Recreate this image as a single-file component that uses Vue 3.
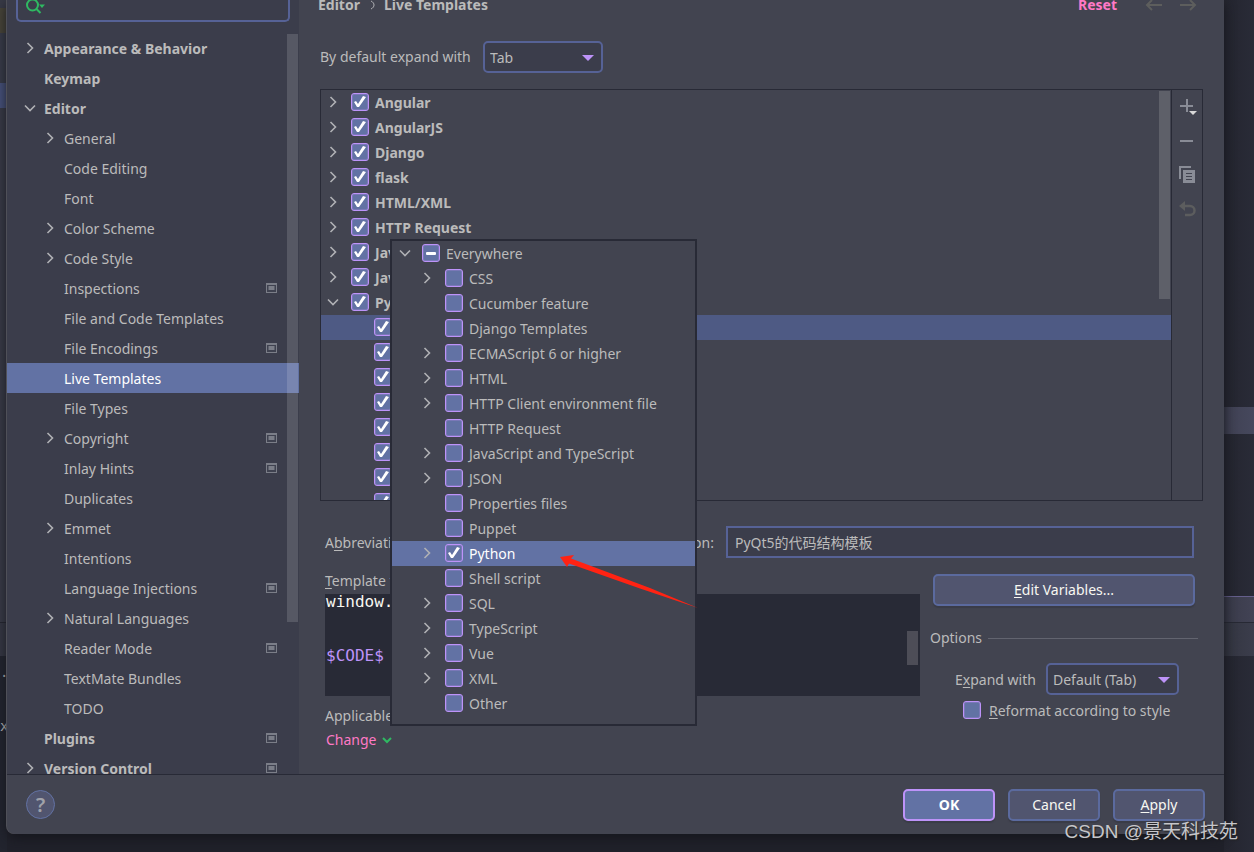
<script setup>
import { ref } from 'vue'

const settings = ref([
  { name: 'Appearance & Behavior', level: 0, arrow: 'right' },
  { name: 'Keymap', level: 0 },
  { name: 'Editor', level: 0, arrow: 'down' },
  { name: 'General', level: 1, arrow: 'right' },
  { name: 'Code Editing', level: 1 },
  { name: 'Font', level: 1 },
  { name: 'Color Scheme', level: 1, arrow: 'right' },
  { name: 'Code Style', level: 1, arrow: 'right' },
  { name: 'Inspections', level: 1, project: true },
  { name: 'File and Code Templates', level: 1 },
  { name: 'File Encodings', level: 1, project: true },
  { name: 'Live Templates', level: 1, selected: true },
  { name: 'File Types', level: 1 },
  { name: 'Copyright', level: 1, arrow: 'right', project: true },
  { name: 'Inlay Hints', level: 1, project: true },
  { name: 'Duplicates', level: 1 },
  { name: 'Emmet', level: 1, arrow: 'right' },
  { name: 'Intentions', level: 1 },
  { name: 'Language Injections', level: 1, project: true },
  { name: 'Natural Languages', level: 1, arrow: 'right' },
  { name: 'Reader Mode', level: 1, project: true },
  { name: 'TextMate Bundles', level: 1 },
  { name: 'TODO', level: 1 },
  { name: 'Plugins', level: 0, project: true },
  { name: 'Version Control', level: 0, arrow: 'right', project: true },
])

const groups = ref([
  { name: 'Angular', on: true },
  { name: 'AngularJS', on: true },
  { name: 'Django', on: true },
  { name: 'flask', on: true },
  { name: 'HTML/XML', on: true },
  { name: 'HTTP Request', on: true },
  { name: 'JavaScript', on: true },
  { name: 'JavaScript Testing', on: true },
  { name: 'Python', on: true, open: true },
])

const templates = ref([true, true, true, true, true, true, true, true])

const contexts = ref([
  { name: 'CSS', arrow: true },
  { name: 'Cucumber feature' },
  { name: 'Django Templates' },
  { name: 'ECMAScript 6 or higher', arrow: true },
  { name: 'HTML', arrow: true },
  { name: 'HTTP Client environment file', arrow: true },
  { name: 'HTTP Request' },
  { name: 'JavaScript and TypeScript', arrow: true },
  { name: 'JSON', arrow: true },
  { name: 'Properties files' },
  { name: 'Puppet' },
  { name: 'Python', arrow: true, on: true, selected: true },
  { name: 'Shell script' },
  { name: 'SQL', arrow: true },
  { name: 'TypeScript', arrow: true },
  { name: 'Vue', arrow: true },
  { name: 'XML', arrow: true },
  { name: 'Other' },
])

const description = ref('PyQt5的代码结构模板')
const reformat = ref(false)
</script>

<template>
  <div class="screen">
    <div class="backdrop" aria-hidden="true">
      <i class="l-top"></i><i class="l-brown"></i><i class="l-gap"></i><i class="l-blue"></i>
      <i class="l-mid"></i><i class="l-bar"></i>
      <div class="l-code"><span>.</span><span>x</span></div>
    </div>

    <div class="dialog">
      <div class="body">
        <aside class="sidebar">
          <div class="search">
            <svg width="22" height="20" viewBox="0 0 22 20" fill="none" stroke="#2fb962" stroke-width="2">
              <circle cx="6.500" cy="5" r="5.500" /><path d="M10.500 9l4 4" />
              <path d="M13 4.500h6l-3 3.500z" fill="#2fb962" stroke="none" />
            </svg>
            <input type="text" aria-label="Search settings" />
          </div>
          <ul class="tree">
            <li
              v-for="item in settings"
              :key="item.name"
              :class="['node', 'level' + item.level, { selected: item.selected }]"
            >
              <span class="twist">
                <svg v-if="item.arrow" :class="{ open: item.arrow === 'down' }" class="chevron" viewBox="0 0 14 14">
                  <path d="M4.500 2l5 5-5 5" />
                </svg>
              </span>
              <a href="#">{{ item.name }}</a>
              <svg v-if="item.project" class="project" viewBox="0 0 11 10">
                <path d="M0 0h11v10H0z" fill="#7b7e88" /><path d="M1 2h9v7H1z" fill="#3f4250" />
                <path d="M3 3h5v4H3z" fill="#7b7e88" /><path d="M2 3h1v4H2zM8 3h1v4H8z" fill="#5d606c" />
              </svg>
            </li>
          </ul>
          <div class="tree-scroll"></div>
        </aside>

        <main class="main">
          <header class="crumbs">
            <span>Editor</span>
            <svg width="6" height="10" viewBox="0 0 6 10"><path d="M1 1c2 1 3 2.500 3 4s-1 3-3 4" /></svg>
            <span>Live Templates</span>
            <a href="#" class="reset">Reset</a>
            <button class="nav" aria-label="Back">
              <svg viewBox="0 0 18 12"><path d="M17 6H2M7 1L2 6l5 5" /></svg>
            </button>
            <button class="nav" aria-label="Forward">
              <svg viewBox="0 0 18 12"><path d="M1 6h15M11 1l5 5-5 5" /></svg>
            </button>
          </header>

          <div class="default-row">
            <label for="default-key">By default expand with</label>
            <span class="select w-tab">
              <select id="default-key"><option>Tab</option></select>
              <svg viewBox="0 0 12 6"><path d="M0 0h12L6 6z" /></svg>
            </span>
          </div>

          <div class="list-box">
            <ul class="list">
              <li v-for="(group, i) in groups" :key="group.name" class="group">
                <svg class="chevron" :class="{ open: group.open }" viewBox="0 0 14 14"><path d="M4.500 2l5 5-5 5" /></svg>
                <input :id="'group' + i" v-model="group.on" type="checkbox" class="check" />
                <label :for="'group' + i">{{ group.name }}</label>
              </li>
              <li v-for="(on, i) in templates" :key="i" class="child" :class="{ current: i === 0 }">
                <input v-model="templates[i]" type="checkbox" class="check" aria-label="Enable template" />
              </li>
            </ul>
            <div class="list-scroll"></div>
            <div class="tools">
              <button aria-label="Add">
                <svg viewBox="0 0 18 18">
                  <path d="M8 1v13M1 8h13" stroke="#898c96" stroke-width="2" />
                  <path d="M10 13h8l-4 4z" fill="#d8d8d8" />
                </svg>
              </button>
              <button aria-label="Remove">
                <svg viewBox="0 0 18 18"><path d="M1 9h13" stroke="#898c96" stroke-width="2" /></svg>
              </button>
              <button aria-label="Duplicate">
                <svg viewBox="0 0 18 18">
                  <path d="M1 13V1h11" fill="none" stroke="#898c96" stroke-width="2" />
                  <path d="M4 4h12v13H4z" fill="#898c96" />
                  <path d="M7 7.500h6M7 10.500h6M7 13.500h6" stroke="#424450" />
                </svg>
              </button>
              <button aria-label="Restore">
                <svg viewBox="0 0 18 18">
                  <path d="M5 6h6a4 4 0 0 1 0 9H6" fill="none" stroke="#5c5d5e" stroke-width="2.500" />
                  <path d="M0 6l6-5v10z" fill="#5c5d5e" />
                </svg>
              </button>
            </div>
          </div>

          <div class="form">
            <div class="name-row">
              <div class="name-cell">
                <label for="abbr">A<u>b</u>breviation:</label>
                <input id="abbr" type="text" />
                <label for="desc">Description:</label>
              </div>
              <input id="desc" v-model="description" type="text" class="desc" />
            </div>

            <div class="editor-grid">
              <section class="editor-col">
                <div class="caption"><u>T</u>emplate text:</div>
                <div class="code">
                  <pre>window.show()


<b>$CODE$</b></pre>
                  <div class="code-scroll"></div>
                </div>
                <div class="applicable">Applicable in Python</div>
                <a href="#" class="change">Change
                  <svg viewBox="0 0 10 7"><path d="M1 1l4 4 4-4" /></svg>
                </a>
              </section>
              <section class="options-col">
                <button class="btn edit"><span><u>E</u>dit Variables...</span></button>
                <div class="options-title">Options</div>
                <div class="expand-row">
                  <label for="expand">E<u>x</u>pand with</label>
                  <span class="select w-default">
                    <select id="expand"><option>Default (Tab)</option></select>
                    <svg viewBox="0 0 12 6"><path d="M0 0h12L6 6z" /></svg>
                  </span>
                </div>
                <div class="reformat-row">
                  <input id="reformat" v-model="reformat" type="checkbox" class="check" />
                  <label for="reformat"><u>R</u>eformat according to style</label>
                </div>
              </section>
            </div>
          </div>

          <div class="popup">
            <div class="ctx root">
              <svg class="chevron open" viewBox="0 0 14 14"><path d="M4.500 2l5 5-5 5" /></svg>
              <input id="everywhere" type="checkbox" class="check mixed" />
              <label for="everywhere">Everywhere</label>
            </div>
            <div v-for="(ctx, i) in contexts" :key="i" class="ctx" :class="{ picked: ctx.selected }">
              <span class="twist">
                <svg v-if="ctx.arrow" class="chevron" viewBox="0 0 14 14"><path d="M4.500 2l5 5-5 5" /></svg>
              </span>
              <input :id="'ctx' + i" v-model="ctx.on" type="checkbox" class="check" />
              <label :for="'ctx' + i">{{ ctx.name }}</label>
            </div>
            <svg class="pointer" viewBox="0 0 142 56">
              <path d="M0 2L14 0 11 3.500 90 33 138 53 80 33.500 9 8.500 7 12z" fill="#ff2313" />
            </svg>
          </div>
        </main>
      </div>

      <footer class="footer">
        <button class="help" aria-label="Help">?</button>
        <button class="btn ok">OK</button>
        <button class="btn">Cancel</button>
        <button class="btn"><span><u>A</u>pply</span></button>
      </footer>
    </div>

    <div class="backdrop right" aria-hidden="true">
      <i class="r-top"></i><i class="r-band"></i><i class="r-gap"></i><i class="r-tab"></i><i class="r-bar"></i>
    </div>

    <div class="watermark">CSDN @景天科技苑</div>
  </div>
</template>

<style>
body {
  margin: 0;
  background: #20222c;
}
</style>

<style scoped>
* {
  box-sizing: border-box;
}
.screen {
  position: relative;
  display: grid;
  grid-template-columns: 7px minmax(0, 1fr) 30px;
  height: 100vh;
  overflow: hidden;
  background: linear-gradient(to bottom, #282a36 95%, #20212a 98%);
  color: #bbbbbb;
  font: 14px/20px "Noto Sans", "Noto Sans CJK SC", sans-serif;
}
button,
input,
select {
  margin: 0;
  padding: 0;
  border: 0;
  background: none;
  color: inherit;
  font: inherit;
}
a {
  color: inherit;
  text-decoration: none;
}
ul {
  margin: 0;
  padding: 0;
  list-style: none;
}
svg {
  display: block;
}
u {
  text-underline-offset: 2px;
}

.backdrop {
  display: flex;
  flex-direction: column;
}
.l-top { height: 8px; background: #383a46; }
.l-brown { height: 25px; background: #474438; }
.l-gap { height: 50px; background: #383b48; }
.l-blue { height: 25px; background: #46517a; }
.l-mid { height: 515px; background: #383a46; border-bottom: 1px solid #24262f; }
.l-bar { height: 33px; background: #353743; }
.l-code {
  flex: 1;
  background: #22242e;
  font: 14px/32px "DejaVu Sans Mono", monospace;
}
.l-code span {
  display: block;
  height: 54px;
}
.right {
  background: linear-gradient(to right, #24252f, #292b37);
}
.r-top { height: 407px; }
.r-band { height: 27px; background: linear-gradient(to right, #3f4052, #46485d); }
.r-gap { height: 162px; }
.r-tab { height: 26px; background: linear-gradient(to right, #393a49, #424355); border-top: 1px solid #655f8c; }
.r-bar { height: 34px; background: linear-gradient(to right, #333540, #3b3d4c); border-top: 1px solid #272934; }

.dialog {
  position: relative;
  display: flex;
  flex-direction: column;
  height: calc(100vh - 18px);
  background: #424450;
  border-radius: 0 0 8px 8px;
  overflow: hidden;
  box-shadow: -1px 0 0 #4f5058, 0 4px 12px #15161d;
}
.body {
  display: grid;
  grid-template-columns: 292px minmax(0, 1fr);
  flex: 1;
  min-height: 0;
}

.sidebar {
  position: relative;
  display: flex;
  flex-direction: column;
  min-height: 0;
  overflow: hidden;
  background: #3b3d4b;
}
.search {
  display: flex;
  flex: none;
  height: 22px;
  margin: 0 9px 11px;
  padding: 0 8px;
  border: 2px solid #566296;
  border-top: 0;
  border-radius: 0 0 5px 5px;
}
.search svg {
  flex: none;
}
.search input {
  flex: 1;
  min-width: 0;
  outline: none;
}
.node {
  display: flex;
  align-items: center;
  height: 30px;
  padding: 0 22px 0 16px;
}
.node a {
  flex: 1;
  padding-top: 2px;
  white-space: nowrap;
}
.level0 {
  font-weight: 700;
}
.level1 {
  padding-left: 36px;
}
.node.selected {
  background: #6272a4;
  color: #ffffff;
}
.twist {
  flex: none;
  width: 21px;
}
.chevron {
  flex: none;
  width: 14px;
  height: 14px;
  fill: none;
  stroke: #b0b1b5;
  stroke-width: 1.6;
}
.chevron.open {
  transform: rotate(90deg);
}
.project {
  width: 11px;
  height: 10px;
}
.tree-scroll {
  position: absolute;
  top: 34px;
  right: 1px;
  width: 11px;
  height: 588px;
  background: rgba(255, 255, 255, 0.14);
}

.main {
  position: relative;
  display: flex;
  flex-direction: column;
  min-height: 0;
}
.crumbs {
  display: flex;
  align-items: center;
  height: 10px;
  padding: 0 27px 0 19px;
  font-weight: 700;
}
.crumbs > svg {
  margin: 0 8px 0 10px;
  fill: none;
  stroke: #b0b1b5;
}
.reset {
  margin-left: auto;
  margin-right: 28px;
  color: #ff79c6;
}
.nav {
  width: 18px;
  height: 12px;
}
.nav + .nav {
  margin-left: 16px;
}
.nav svg {
  fill: none;
  stroke: #5d5e5d;
  stroke-width: 2;
}
.default-row {
  display: flex;
  align-items: center;
  gap: 8px;
  margin: 31px 21px 16px;
}
.default-row label {
  min-width: 155px;
}
.select {
  position: relative;
  display: block;
  height: 32px;
}
.w-tab {
  width: 120px;
}
.w-default {
  width: 133px;
}
.select select {
  width: 100%;
  height: 100%;
  padding: 2px 5px 0;
  border: 2px solid #566296;
  border-radius: 5px;
  background: #3b3d4b;
  appearance: none;
}
.select svg {
  position: absolute;
  top: 14px;
  right: 9px;
  width: 12px;
  height: 6px;
  fill: #bd93f9;
  pointer-events: none;
}

.list-box {
  position: relative;
  display: grid;
  grid-template-columns: minmax(0, 1fr) 31px;
  height: 412px;
  margin: 0 21px;
  border: 1px solid #282a36;
}
.list {
  overflow: hidden;
}
.group,
.child {
  display: flex;
  align-items: center;
  height: 25px;
}
.group {
  padding-left: 5px;
  font-weight: 700;
}
.group .check {
  margin-right: 6px;
  margin-left: 11px;
}
.group .chevron,
.ctx .chevron {
  margin-bottom: 2px;
}
.child {
  padding-left: 53px;
}
.child.current {
  background: #4e5a84;
}
.list-scroll {
  position: absolute;
  top: 1px;
  right: 32px;
  width: 11px;
  height: 208px;
  background: #5e6069;
}
.tools {
  display: flex;
  flex-direction: column;
  gap: 16px;
  padding: 8px 0 0 7px;
  border-left: 1px solid #282a36;
}
.tools button,
.tools svg {
  width: 18px;
  height: 18px;
}

.check {
  position: relative;
  flex: none;
  width: 18px;
  height: 18px;
  border: 1px solid #bd93f9;
  border-radius: 3px;
  background: #6272a4;
  box-shadow: inset 0 0 0 1px #7a78b8;
  appearance: none;
}
.group .check,
.child .check,
.ctx .check {
  margin-bottom: 1px;
}
.check:checked::after {
  content: "";
  position: absolute;
  inset: 0;
  background: #ffffff;
  clip-path: polygon(2px 8px, 4px 7px, 6px 10px, 11px 2px, 14px 3px, 7px 13px, 5px 13px);
}
.mixed::after {
  content: "";
  position: absolute;
  top: 7px;
  left: 3px;
  width: 10px;
  height: 3px;
  border-radius: 1px;
  background: #ffffff;
}

.form {
  padding: 25px 26px 0;
}
.name-row {
  display: grid;
  grid-template-columns: 389px minmax(0, 1fr);
  column-gap: 12px;
  margin-right: 4px;
}
.name-cell {
  display: flex;
  align-items: center;
  gap: 12px;
}
.name-cell label {
  padding-top: 2px;
}
.name-cell input {
  flex: 1;
  min-width: 0;
  height: 32px;
  border: 2px solid #566296;
  background: #3b3d4b;
}
.desc {
  height: 32px;
  padding: 0 7px;
  border: 2px solid #566296;
  background: #3b3d4b;
}
.editor-grid {
  display: grid;
  grid-template-columns: minmax(0, 1fr) 268px;
  column-gap: 10px;
  margin-top: 8px;
}
.caption {
  padding-top: 2px;
  line-height: 26px;
}
.code {
  position: relative;
  height: 102px;
  overflow: hidden;
  background: #282a36;
  color: #f8f8f2;
}
.code pre {
  margin: -1px 0 0;
  padding-left: 1px;
  font: 16px/18px "DejaVu Sans Mono", monospace;
}
.code b {
  color: #bd93f9;
  font-weight: 400;
}
.code-scroll {
  position: absolute;
  top: 37px;
  right: 2px;
  width: 11px;
  height: 34px;
  background: #4d4d57;
}
.applicable {
  margin-top: 8px;
  line-height: 24px;
}
.change {
  display: flex;
  align-items: center;
  gap: 5px;
  width: max-content;
  padding-left: 1px;
  color: #ff79c6;
  line-height: 24px;
}
.change svg {
  width: 10px;
  height: 7px;
  fill: none;
  stroke: #2fb962;
  stroke-width: 2;
}
.options-col {
  padding-top: 8px;
}
.btn {
  height: 32px;
  border: 2px solid #5b6a9e;
  border-radius: 5px;
  background: #51556f;
  color: #f8f8f2;
  box-shadow: 0 2px 1px #3a3c47;
}
.edit {
  display: block;
  width: 262px;
  margin: 0 auto;
}
.options-title {
  display: flex;
  align-items: center;
  gap: 6px;
  margin-top: 22px;
}
.options-title::after {
  content: "";
  flex: 1;
  border-top: 1px solid #62646f;
}
.expand-row {
  display: flex;
  align-items: center;
  gap: 8px;
  margin: 15px 0 0 25px;
}
.expand-row label,
.reformat-row label {
  padding-top: 2px;
}
.expand-row .select {
  margin-right: 19px;
  margin-left: auto;
}
.reformat-row {
  display: flex;
  align-items: center;
  gap: 8px;
  margin: 4px 0 0 33px;
}

.popup {
  position: absolute;
  top: 239px;
  left: 91px;
  width: 307px;
  padding-bottom: 8px;
  border: 2px solid #282a36;
  background: #424450;
}
.ctx {
  display: flex;
  align-items: center;
  height: 25px;
  padding-left: 28px;
  white-space: nowrap;
}
.ctx .twist {
  width: 25px;
}
.ctx .check {
  margin-right: 6px;
}
.ctx.root {
  padding-left: 6px;
}
.root .check {
  margin-left: 10px;
}
.picked {
  background: #6272a4;
  color: #ffffff;
}
.pointer {
  position: absolute;
  top: 314px;
  left: 168px;
  width: 142px;
  height: 56px;
}

.footer {
  display: flex;
  flex: none;
  align-items: center;
  gap: 13px;
  height: 60px;
  padding: 0 19px;
  border-top: 1px solid #282a36;
}
.footer .btn {
  width: 92px;
}
.footer .ok {
  border-color: #bd93f9;
  background: #6272a4;
  color: #ffffff;
  font-weight: 700;
}
.help {
  width: 29px;
  height: 29px;
  margin-right: auto;
  border: 1px solid #6272a4;
  border-radius: 50%;
  background: #51556f;
  color: #a0a2aa;
  font-size: 20px;
  font-weight: 600;
}
.watermark {
  position: absolute;
  right: 16px;
  bottom: 6px;
  color: #c6c6ca;
  font: 19px/28px "Liberation Sans", "Noto Sans CJK SC", sans-serif;
  text-shadow: 1px 1px 1px #222222;
}
</style>
